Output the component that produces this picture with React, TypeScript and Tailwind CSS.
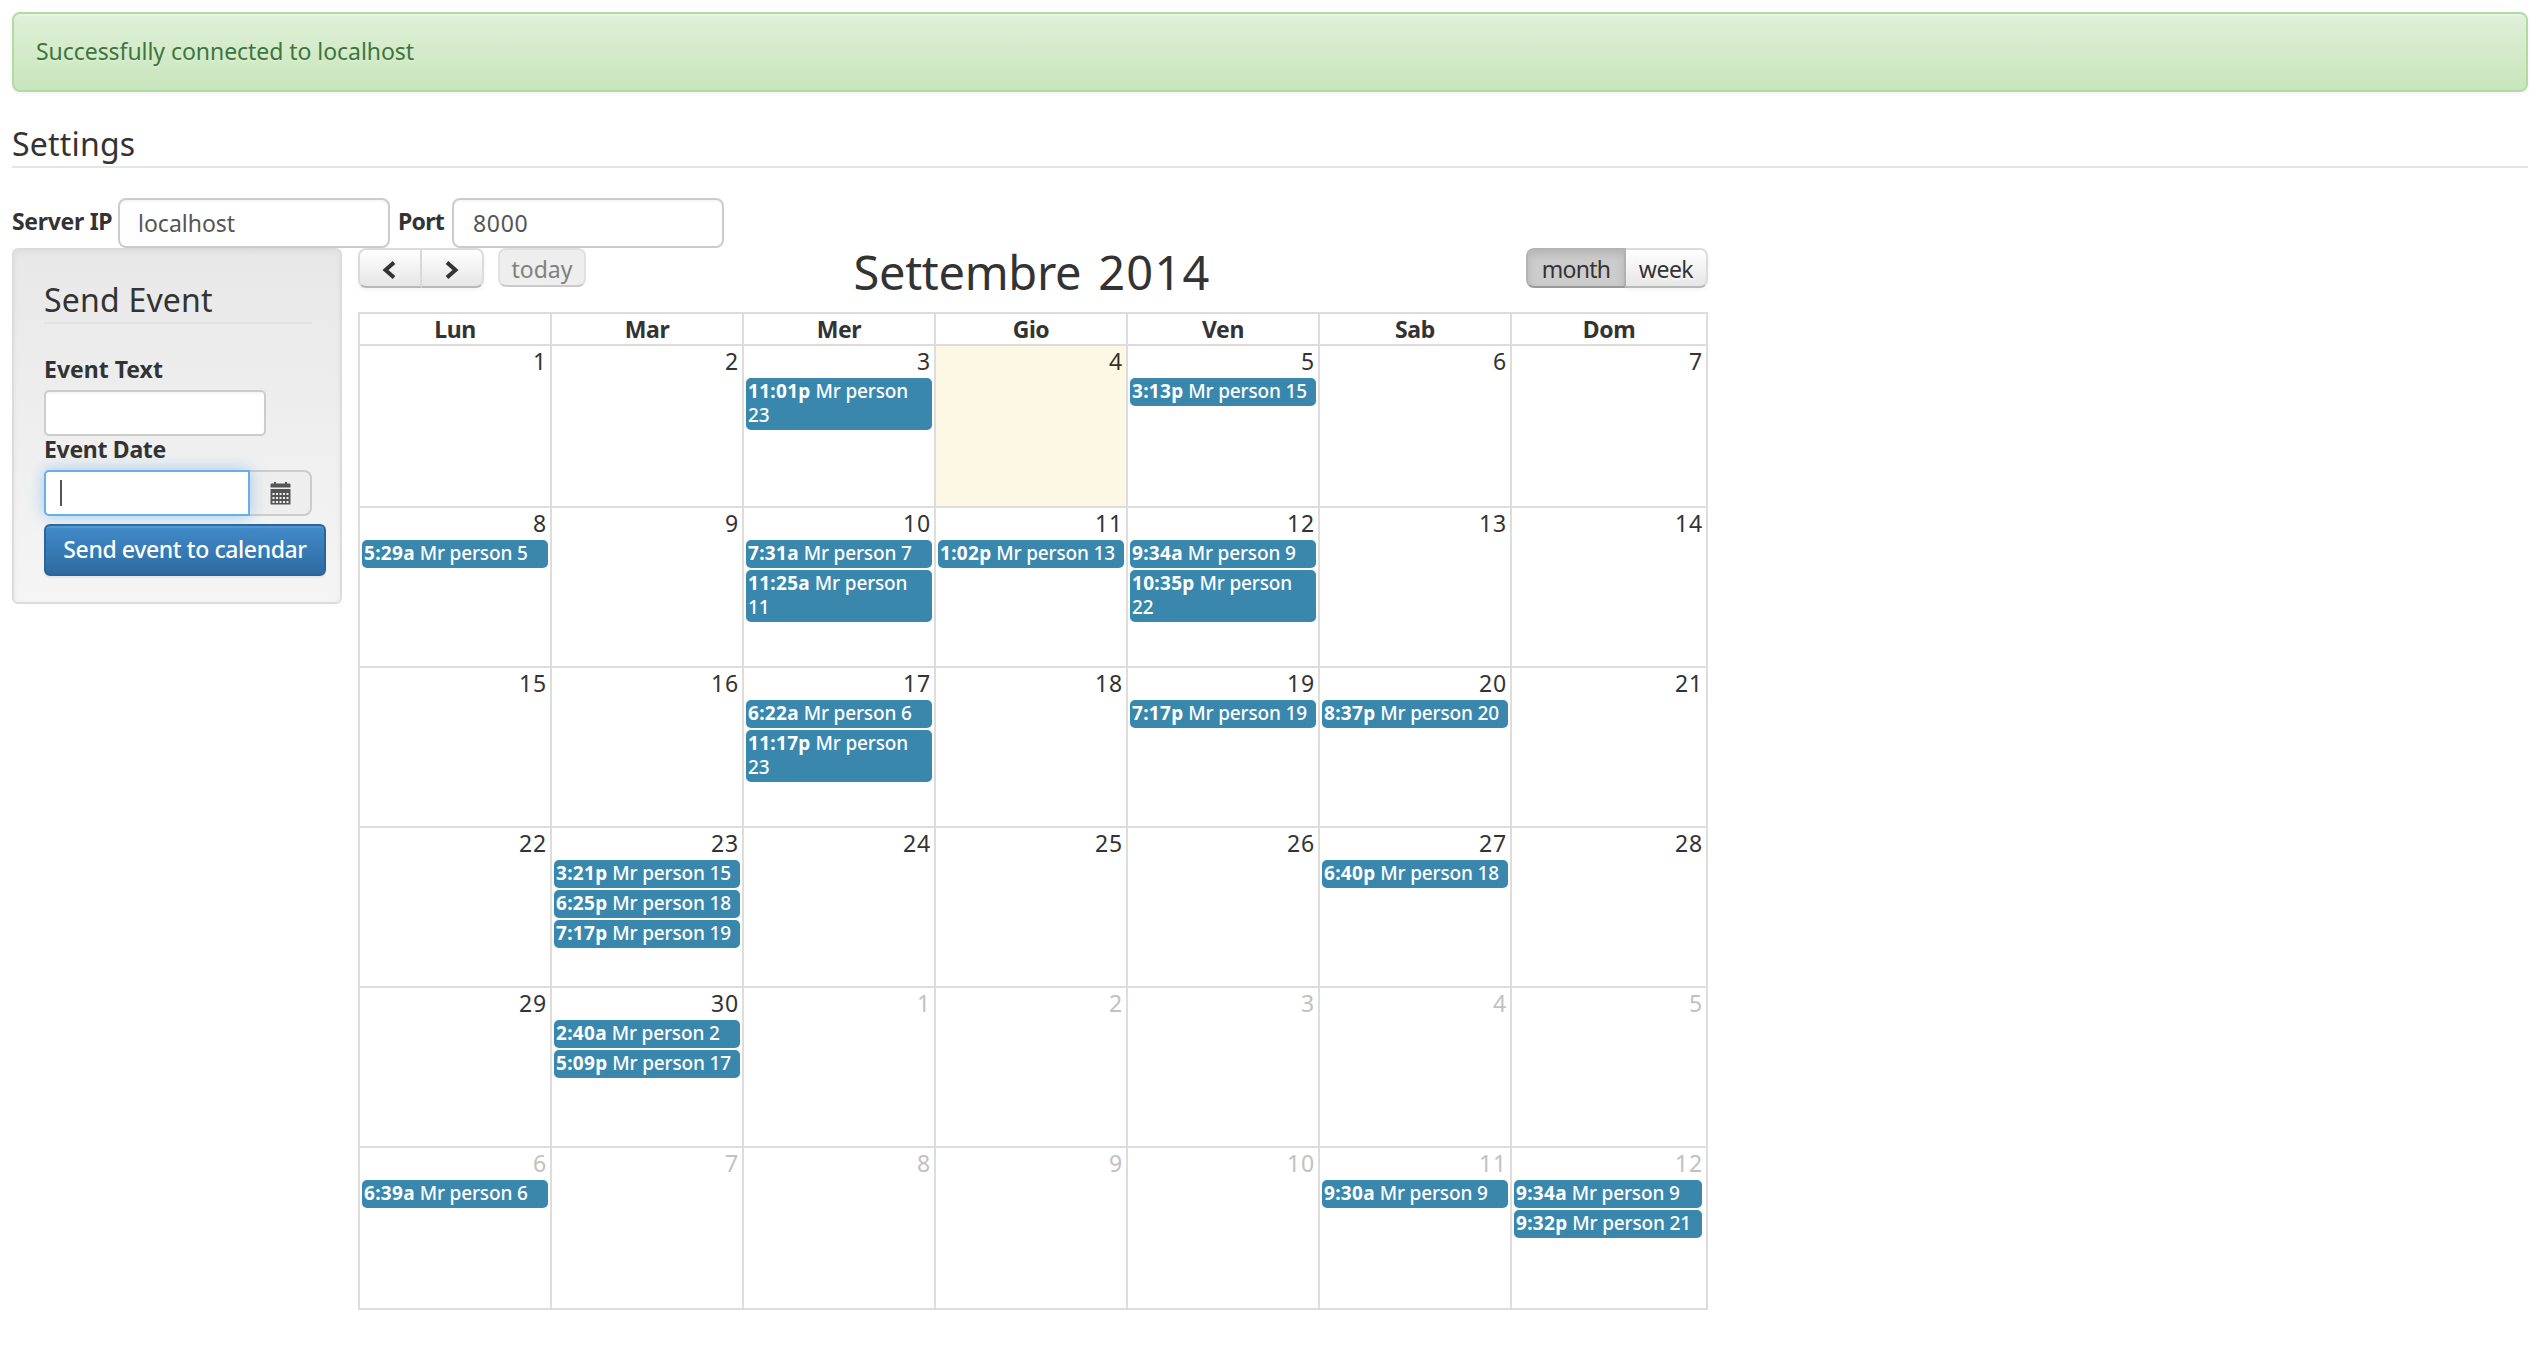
type CalendarEvent = [time: string, title: string];
type Day = { n: number; other?: boolean; today?: boolean; events?: CalendarEvent[] };

const dayNames = ["Lun", "Mar", "Mer", "Gio", "Ven", "Sab", "Dom"];

const events: Record<number, CalendarEvent[]> = {
  2: [["11:01p", "Mr person 23"]],
  4: [["3:13p", "Mr person 15"]],
  7: [["5:29a", "Mr person 5"]],
  9: [["7:31a", "Mr person 7"], ["11:25a", "Mr person 11"]],
  10: [["1:02p", "Mr person 13"]],
  11: [["9:34a", "Mr person 9"], ["10:35p", "Mr person 22"]],
  16: [["6:22a", "Mr person 6"], ["11:17p", "Mr person 23"]],
  18: [["7:17p", "Mr person 19"]],
  19: [["8:37p", "Mr person 20"]],
  22: [["3:21p", "Mr person 15"], ["6:25p", "Mr person 18"], ["7:17p", "Mr person 19"]],
  26: [["6:40p", "Mr person 18"]],
  29: [["2:40a", "Mr person 2"], ["5:09p", "Mr person 17"]],
  35: [["6:39a", "Mr person 6"]],
  40: [["9:30a", "Mr person 9"]],
  41: [["9:34a", "Mr person 9"], ["9:32p", "Mr person 21"]],
};

const days: Day[] = Array.from({ length: 42 }, (_, i) => ({
  n: i < 30 ? i + 1 : i - 29,
  other: i >= 30,
  today: i === 3,
  events: events[i],
}));

function CalendarIcon() {
  return (
    <svg width="21" height="23" viewBox="0 0 21 23" fill="#555">
      <path d="M4 0h2v1.5h9V0h2v1.5h2.5q1 0 1 1V5.500H.5v-3q0-1 1-1H4z" />
      <path
        fillRule="evenodd"
        d="M.5 7h20v15q0 .5-.5.5H1q-.5 0-.5-.5zM2.500 11v2h2v-2zM6 11v2h2v-2zM9.500 11v2h2v-2zM13 11v2h2v-2zM16.500 11v2h2v-2zM2.500 15v2h2v-2zM6 15v2h2v-2zM9.500 15v2h2v-2zM13 15v2h2v-2zM16.500 15v2h2v-2zM2.500 19v2h2v-2zM6 19v2h2v-2zM9.500 19v2h2v-2zM13 19v2h2v-2zM16.500 19v2h2v-2z"
      />
    </svg>
  );
}

function Chevron({ right = false }: { right?: boolean }) {
  return (
    <svg width="14" height="20" viewBox="0 0 14 20" fill="none" stroke="#333" strokeWidth="4">
      <path d={right ? "M2 2.500L10.500 10L2 17.500" : "M12 2.500L3.500 10L12 17.500"} />
    </svg>
  );
}

const inputBase =
  "bg-white border-2 border-[#ccc] text-[#555] shadow-[inset_0_2px_2px_rgba(0,0,0,0.04)]";
const buttonBase =
  "flex h-10 items-center justify-center border-2 border-[#dcdcdc] border-b-[#b8b8b8] bg-linear-to-b from-white to-[#e6e6e6] shadow-[0_2px_4px_rgba(0,0,0,0.05)] [text-shadow:0_2px_2px_rgba(255,255,255,0.75)]";

function DayCell({ day, last }: { day: Day; last: boolean }) {
  return (
    <div
      className={`border-t-2 border-l-2 border-[#ddd] pl-[2px] ${last ? "pr-1" : "pr-[2px]"} ${day.today ? "bg-[#fcf8e3]" : ""}`}
    >
      <div
        className={`h-8 text-right leading-[31px] tracking-[0.9px] ${last ? "-mr-px" : "pr-px"} ${day.other ? "text-[#c1c1c1]" : ""}`}
      >
        {day.n}
      </div>
      <div className="flex flex-col gap-[2px]">
        {day.events?.map(([time, title]) => (
          <div
            key={time}
            className="rounded-[5px] bg-[#3a87ad] pt-px pr-1 pb-[3px] pl-[2px] text-[19px] leading-6 font-medium tracking-[-0.15px] text-white"
          >
            <span className="font-bold tracking-[0.3px]">{time}</span> {title}
          </div>
        ))}
      </div>
    </div>
  );
}

export default function App() {
  return (
    <div className="h-[1366px] overflow-hidden bg-white pt-3 pr-[10px] pl-3 font-['Noto_Sans','Open_Sans',sans-serif] text-[23px] text-[#333]">
      <div className="flex h-20 items-center rounded-lg border-2 border-[#b2dba1] bg-linear-to-b from-[#dff0d8] to-[#c8e5bc] pb-px pl-[22px] tracking-[-0.05px] text-[#3c763d] shadow-[inset_0_2px_0_rgba(255,255,255,0.25),0_2px_4px_rgba(0,0,0,0.05)] [text-shadow:0_2px_0_rgba(255,255,255,0.2)]">
        Successfully connected to localhost
      </div>

      <h2 className="mt-7 h-12 border-b-2 border-[#e5e5e5] text-[32px] leading-[47px] tracking-[0.2px]">
        Settings
      </h2>

      <div className="mt-[30px] flex h-[50px]">
        <label className="w-[106px] leading-[46px] font-bold tracking-[-0.3px] whitespace-nowrap">
          Server IP
        </label>
        <div className={`w-[272px] rounded-lg pl-[18px] leading-[47px] ${inputBase}`}>localhost</div>
        <label className="w-[62px] pl-2 leading-[46px] font-bold tracking-[-0.7px]">Port</label>
        <div className={`w-[272px] rounded-lg pl-[19px] leading-[47px] tracking-[0.7px] ${inputBase}`}>
          8000
        </div>
      </div>

      <div className="flex items-start gap-4">
        <aside className="h-[356px] w-[330px] rounded-md border-2 border-[#dcdcdc] bg-linear-to-b from-[#e8e8e8] to-[#f5f5f5] pt-7 pr-7 pl-[30px] shadow-[inset_0_2px_6px_rgba(0,0,0,0.05)]">
          <h2 className="h-[46px] border-b-2 border-[#e2e2e2] text-[32px] leading-[43px] tracking-[0.2px]">
            Send Event
          </h2>
          <label className="mt-[29px] block leading-8 font-bold">Event Text</label>
          <div className={`mt-[5px] h-[46px] w-[222px] rounded-[5px] ${inputBase}`} />
          <label className="block leading-[26px] font-bold tracking-[-0.3px]">Event Date</label>
          <div className="mt-2 flex h-[46px]">
            <div className="z-10 flex w-[206px] items-center rounded-l-[5px] border-2 border-[#66afe9] bg-white pl-[14px] shadow-[0_0_16px_rgba(102,175,233,0.6)]">
              <span className="h-[26px] w-[2px] bg-[#555]" />
            </div>
            <div className="flex w-[62px] items-center justify-center rounded-r-lg border-2 border-l-0 border-[#ccc] bg-[#eee]">
              <CalendarIcon />
            </div>
          </div>
          <button className="mt-2 flex h-[52px] w-[282px] items-center justify-center rounded-md border-2 border-[#2b669a] bg-linear-to-b from-[#428bca] to-[#2d6ca2] pb-px font-medium tracking-[-0.4px] whitespace-nowrap text-white shadow-[inset_0_2px_0_rgba(255,255,255,0.1),0_2px_2px_rgba(0,0,0,0.06)]">
            Send event to calendar
          </button>
        </aside>

        <main className="w-[1350px]">
          <div className="grid h-16 grid-cols-3 items-start">
            <div className="flex gap-[14px]">
              <div className="flex">
                <button className={`w-16 rounded-l-lg pt-[3px] pr-[3px] ${buttonBase}`}>
                  <Chevron />
                </button>
                <button className={`w-[62px] rounded-r-lg border-l-0 pt-[3px] ${buttonBase}`}>
                  <Chevron right />
                </button>
              </div>
              <button className="flex h-[39px] w-[88px] items-center justify-center rounded-lg border-2 border-[#e0e0e0] border-b-[#cacaca] bg-[#eee] pt-[3px] text-[#808080]">
                today
              </button>
            </div>
            <h1 className="pr-[2px] text-center text-[47px] leading-[49px] tracking-[-0.3px] whitespace-nowrap [word-spacing:5px]">
              Settembre <span className="tracking-[1.2px]">2014</span>
            </h1>
            <div className="flex justify-end">
              <button className="flex h-10 w-[100px] items-center justify-center rounded-l-lg border-2 border-[#b4b4b4] border-b-[#999] bg-[#ccc] pt-[3px] tracking-[-0.7px] shadow-[inset_0_4px_8px_rgba(0,0,0,0.12)]">
                month
              </button>
              <button
                className={`w-[82px] rounded-r-lg border-l-0 pt-[3px] tracking-[-0.5px] ${buttonBase}`}
              >
                week
              </button>
            </div>
          </div>

          <div className="grid grid-cols-[repeat(6,192px)_196px] grid-rows-[32px_162px_repeat(4,160px)_162px] border-r-2 border-b-2 border-[#ddd]">
            {dayNames.map((name) => (
              <div
                key={name}
                className="border-t-2 border-l-2 border-[#ddd] text-center leading-[31px] font-bold tracking-[-0.4px]"
              >
                {name}
              </div>
            ))}
            {days.map((day, i) => (
              <DayCell key={i} day={day} last={i % 7 === 6} />
            ))}
          </div>
        </main>
      </div>
    </div>
  );
}
